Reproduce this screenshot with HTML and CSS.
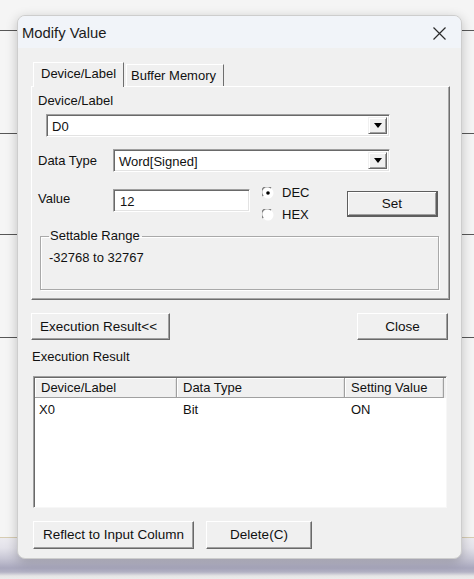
FILE: index.html
```html
<!DOCTYPE html>
<html>
<head>
<meta charset="utf-8">
<title>Modify Value</title>
<link rel="stylesheet" href="styles.css">
</head>
<body>
<div class="desk">
  <div class="dialog">
    <div class="titlebar">
      <span class="title">Modify Value</span>
      <svg class="close" width="13" height="13" viewBox="0 0 13 13"><path d="M0.5 0.5 L12.5 12.5 M12.5 0.5 L0.5 12.5" stroke="#2b2b2b" stroke-width="1.2" fill="none"/></svg>
    </div>
    <div class="content">
      <div class="tabs">
        <div class="tab active">Device/Label</div>
        <div class="tab">Buffer Memory</div>
      </div>
      <div class="panel">
        <div class="lbl top-lbl">Device/Label</div>
        <div class="combo combo-dev">
          <span class="combo-text">D0</span>
          <span class="drop"><svg width="8" height="5" viewBox="0 0 8 5"><path d="M0 0 H8 L4 5 Z" fill="#000"/></svg></span>
        </div>
        <div class="row row-type">
          <span class="lbl fixed">Data Type</span>
          <div class="combo combo-type">
            <span class="combo-text">Word[Signed]</span>
            <span class="drop"><svg width="8" height="5" viewBox="0 0 8 5"><path d="M0 0 H8 L4 5 Z" fill="#000"/></svg></span>
          </div>
        </div>
        <div class="row row-value">
          <span class="lbl fixed">Value</span>
          <div class="edit">12</div>
          <div class="radios">
            <div class="radio">
              <svg width="12" height="12" viewBox="0 0 12 12"><circle cx="6" cy="6" r="5.5" fill="#fff"/><path d="M1.2 9 A5.3 5.3 0 0 1 9 1.2" stroke="#7a7a7a" stroke-width="1.2" fill="none"/><circle cx="6" cy="6" r="1.8" fill="#000"/></svg>
              <span>DEC</span>
            </div>
            <div class="radio">
              <svg width="12" height="12" viewBox="0 0 12 12"><circle cx="6" cy="6" r="5.5" fill="#fff"/><path d="M1.2 9 A5.3 5.3 0 0 1 9 1.2" stroke="#7a7a7a" stroke-width="1.2" fill="none"/></svg>
              <span>HEX</span>
            </div>
          </div>
          <button class="btn btn-set">Set</button>
        </div>
        <fieldset class="group">
          <legend>Settable Range</legend>
          <div class="range">-32768 to 32767</div>
        </fieldset>
      </div>
      <div class="btnrow">
        <button class="btn btn-exec">Execution Result&lt;&lt;</button>
        <button class="btn btn-close">Close</button>
      </div>
      <div class="lbl section-lbl">Execution Result</div>
      <div class="list">
        <div class="lhead">
          <div class="c1">Device/Label</div>
          <div class="c2">Data Type</div>
          <div class="c3">Setting Value</div>
        </div>
        <div class="lrow">
          <div class="c1">X0</div>
          <div class="c2">Bit</div>
          <div class="c3">ON</div>
        </div>
      </div>
      <div class="btnrow2">
        <button class="btn btn-reflect">Reflect to Input Column</button>
        <button class="btn btn-delete">Delete(C)</button>
      </div>
    </div>
  </div>
</div>
</body>
</html>
```

FILE: styles.css
```css
* { box-sizing: border-box; }

html, body {
  margin: 0;
  padding: 0;
}

body {
  font-family: "Liberation Sans", Arial, sans-serif;
  font-size: 13px;
  color: #111;
  background: #f5f5f5;
}

.desk {
  width: 474px;
  height: 579px;
  overflow: hidden;
  padding: 15px 0 0 17px;
  background:
    linear-gradient(#575757, #575757) 0 30px / 100% 1px no-repeat,
    linear-gradient(#575757, #575757) 0 133px / 100% 1px no-repeat,
    linear-gradient(#575757, #575757) 0 234px / 100% 1px no-repeat,
    linear-gradient(#575757, #575757) 0 337px / 100% 1px no-repeat,
    linear-gradient(#d6ccb2, #d6ccb2) 0 537px / 100% 1px no-repeat,
    linear-gradient(#ecebf0 0px, #e3e2ea 10px, #c9c8d6 20px, #a8a7bd 30px, #b3b2c4 34px, #e6e6e6 38px, #ededed 42px) 0 538px / 100% 41px no-repeat,
    #f5f5f5;
}

.dialog {
  width: 445px;
  height: 544px;
  background: #f0f0f0;
  border: 1px solid #cdcdcd;
  border-radius: 8px;
  box-shadow: 0 3px 12px rgba(0, 0, 0, 0.22);
  overflow: hidden;
  display: flex;
  flex-direction: column;
}

.titlebar {
  height: 32px;
  flex: none;
  background: #f1f4f9;
  display: flex;
  align-items: center;
  justify-content: space-between;
  padding: 0 15px 0 4px;
}

.title {
  font-size: 14.8px;
  color: #1b1b1b;
  padding-top: 1px;
}

.close { display: block; margin-top: 2px; }

.content {
  padding: 14px 11px 0 13px;
  display: flex;
  flex-direction: column;
}

/* tabs */
.tabs {
  display: flex;
  align-items: flex-end;
  padding-left: 2px;
  height: 25px;
  position: relative;
  z-index: 1;
  margin-bottom: -1px;
}

.tab {
  height: 22px;
  width: 98px;
  background: #f0f0f0;
  border-top: 1px solid #fff;
  border-left: 1px solid #fff;
  border-right: 1px solid #6e6e6e;
  padding: 3px 0 0 4px;
  line-height: 16px;
  white-space: nowrap;
  margin-left: 2px;
  margin-bottom: 1px;
}

.tab.active {
  width: 91px;
  height: 25px;
  margin-left: 0;
  margin-bottom: 0;
  padding: 3px 0 0 7px;
}

/* panel */
.panel {
  width: 419px;
  height: 214px;
  border-top: 1px solid #fff;
  border-left: 1px solid #fff;
  border-right: 1px solid #6e6e6e;
  border-bottom: 1px solid #6e6e6e;
  box-shadow: inset -1px -1px 0 #a7a7a7;
  padding: 0 0 0 6px;
  display: flex;
  flex-direction: column;
}

.lbl {
  line-height: 16px;
  white-space: nowrap;
}

.top-lbl { margin-top: 6px; }

.combo {
  height: 23px;
  background: #fff;
  border-top: 1px solid #a0a0a0;
  border-left: 1px solid #a0a0a0;
  border-right: 1px solid #fff;
  border-bottom: 1px solid #fff;
  box-shadow: inset 1px 1px 0 #696969, inset -1px -1px 0 #e3e3e3;
  display: flex;
  align-items: stretch;
  padding: 2px 2px 2px 2px;
}

.combo-text {
  flex: 1;
  line-height: 17px;
  padding-left: 3px;
  padding-top: 1px;
}

.drop {
  width: 19px;
  background: #f0f0f0;
  border-top: 1px solid #f0f0f0;
  border-left: 1px solid #f0f0f0;
  border-right: 1px solid #696969;
  border-bottom: 1px solid #696969;
  box-shadow: inset 1px 1px 0 #fff, inset -1px -1px 0 #a0a0a0;
  display: flex;
  align-items: center;
  justify-content: center;
}

.drop svg { display: block; }

.combo-dev {
  width: 344px;
  margin: 5px 0 0 8px;
}

.row {
  display: flex;
  align-items: center;
}

.fixed { width: 75px; flex: none; }

.row-type { margin-top: 12px; }

.combo-type { width: 277px; }

.row-value {
  margin-top: 17px;
  align-items: flex-start;
  height: 28px;
}

.row-value .fixed { margin-top: 2px; }

.edit {
  width: 137px;
  height: 23px;
  background: #fff;
  border-top: 1px solid #a0a0a0;
  border-left: 1px solid #a0a0a0;
  border-right: 1px solid #fff;
  border-bottom: 1px solid #fff;
  box-shadow: inset 1px 1px 0 #696969, inset -1px -1px 0 #e3e3e3;
  padding: 3px 0 0 6px;
  line-height: 17px;
}

.radios {
  margin-left: 12px;
  margin-top: -4px;
  display: flex;
  flex-direction: column;
  gap: 6px;
  width: 85px;
}

.radio {
  display: flex;
  align-items: center;
  gap: 8px;
  line-height: 16px;
}

.radio svg { display: block; }

.btn {
  font-family: "Liberation Sans", Arial, sans-serif;
  font-size: 13.5px;
  color: #111;
  background: #f0f0f0;
  border-top: 1px solid #fff;
  border-left: 1px solid #fff;
  border-right: 1px solid #696969;
  border-bottom: 1px solid #696969;
  box-shadow: inset -1px -1px 0 #a0a0a0;
  border-radius: 0;
  padding: 0;
  margin: 0;
  line-height: 16px;
  white-space: nowrap;
}

.btn-set {
  width: 91px;
  height: 26px;
  margin-top: 2px;
  border: 1px solid #5e5e5e;
  border-right-width: 2px;
  border-bottom-width: 2px;
  box-shadow: inset 1px 1px 0 #fff, inset -1px -1px 0 #a0a0a0;
}

.group {
  width: 399px;
  height: 61px;
  margin: 12px 0 0 2px;
  padding: 0 0 0 8px;
  border: 1px solid #a9a9a9;
  box-shadow: inset 1px 1px 0 #fff, 1px 1px 0 #fff;
  min-width: 0;
}

.group legend {
  padding: 0 2px 0 1px;
  line-height: 14px;
  margin-left: 0;
}

.range {
  margin-top: 7px;
  line-height: 16px;
}

/* below panel */
.btnrow {
  margin-top: 13px;
  display: flex;
  justify-content: space-between;
  align-items: flex-start;
}

.btn-exec {
  width: 139px;
  height: 27px;
  text-align: left;
  padding-left: 8px;
}

.btn-close {
  width: 91px;
  height: 27px;
  margin-right: 2px;
}

.section-lbl {
  margin-top: 9px;
  margin-left: 1px;
}

.list {
  margin: 11px 0 0 2px;
  width: 414px;
  height: 132px;
  background: #fff;
  border-top: 1px solid #a0a0a0;
  border-left: 1px solid #a0a0a0;
  border-right: 1px solid #f7f7f7;
  border-bottom: 1px solid #f7f7f7;
  box-shadow: inset 1px 1px 0 #696969;
  padding: 1px 0 0 1px;
}

.lhead {
  display: grid;
  grid-template-columns: 142px 168px 99px;
  height: 20px;
  background: #f0f0f0;
}

.lhead > div {
  padding: 2px 0 0 6px;
  line-height: 16px;
  border-right: 1px solid #a0a0a0;
  border-bottom: 1px solid #a0a0a0;
  box-shadow: inset 1px 1px 0 #fff, inset -1px 0 0 #e0e0e0;
  white-space: nowrap;
}

.lrow {
  display: grid;
  grid-template-columns: 142px 168px 99px;
  height: 18px;
  margin-top: 3px;
}

.lrow > div {
  padding-left: 4px;
  line-height: 18px;
}

.lrow .c2, .lrow .c3 { padding-left: 6px; }

.btnrow2 {
  margin: 13px 0 0 2px;
  display: flex;
  gap: 12px;
}

.btn-reflect {
  width: 161px;
  height: 28px;
}

.btn-delete {
  width: 106px;
  height: 28px;
}
```
